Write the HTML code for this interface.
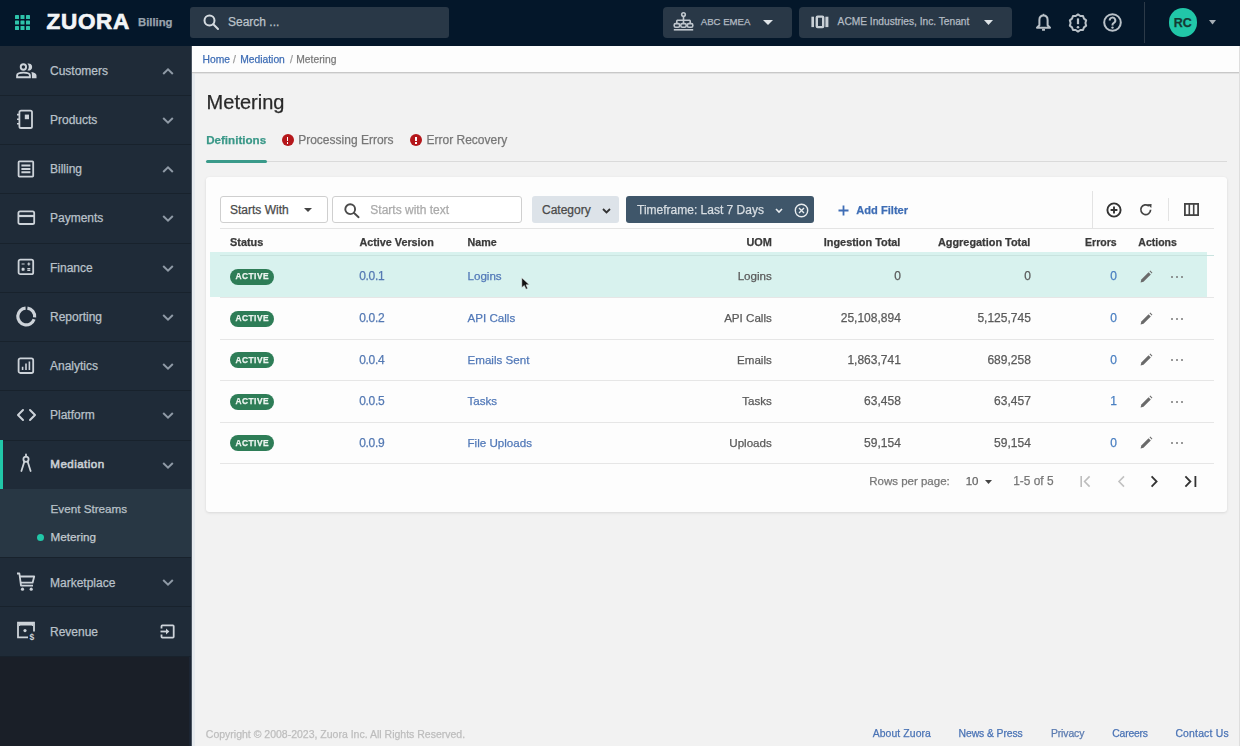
<!DOCTYPE html><html><head><meta charset="utf-8"><style>
*{box-sizing:border-box;margin:0;padding:0}
html,body{width:1240px;height:746px;overflow:hidden;background:#f2f2f2;font-family:"Liberation Sans",sans-serif;position:relative}
.a{position:absolute}
.t{position:absolute;white-space:pre;line-height:1;-webkit-text-stroke:0.25px currentColor}
svg{position:absolute;overflow:visible}
</style></head><body><div id="root" style="position:absolute;left:0;top:0;width:1240px;height:746px;filter:blur(0.35px)">
<div class="a" style="left:0px;top:0px;width:1240px;height:46px;background:#04172a;"></div>
<svg style="left:15px;top:15px;" width="15" height="15" viewBox="0 0 15 15"><g fill="#2ec3aa"><rect x="0.0" y="0.0" width="4" height="4" rx="0.6"/><rect x="0.0" y="5.5" width="4" height="4" rx="0.6"/><rect x="0.0" y="11.0" width="4" height="4" rx="0.6"/><rect x="5.5" y="0.0" width="4" height="4" rx="0.6"/><rect x="5.5" y="5.5" width="4" height="4" rx="0.6"/><rect x="5.5" y="11.0" width="4" height="4" rx="0.6"/><rect x="11.0" y="0.0" width="4" height="4" rx="0.6"/><rect x="11.0" y="5.5" width="4" height="4" rx="0.6"/><rect x="11.0" y="11.0" width="4" height="4" rx="0.6"/></g></svg>
<div class="t" style="left:46.5px;top:11.27px;font-size:22.5px;font-weight:700;color:#f3f5f7;letter-spacing:0.7px;-webkit-text-stroke:0.7px #f3f5f7">ZUORA</div>
<div class="t" style="left:138px;top:17.03px;font-size:11.3px;font-weight:700;color:#98a2ad;">Billing</div>
<div class="a" style="left:190px;top:7px;width:259px;height:31px;background:#293847;border-radius:3px"></div>
<svg style="left:203px;top:14px;" width="16" height="16" viewBox="0 0 16 16"><g fill="none" stroke="#d5dbe0" stroke-width="2"><circle cx="6.5" cy="6.5" r="5"/><path d="M10.3 10.3 L15 15" stroke-linecap="round"/></g></svg>
<div class="t" style="left:228px;top:16.04px;font-size:12px;font-weight:400;color:#bcc3ca;">Search ...</div>
<div class="a" style="left:663px;top:7px;width:129px;height:31px;background:#293847;border-radius:4px"></div>
<svg style="left:673px;top:12px;" width="21" height="20" viewBox="0 0 21 20"><g fill="none" stroke="#bfc6cd" stroke-width="1.6"><circle cx="10.5" cy="2.6" r="1.8"/><path d="M10.5 4.4V8.2 M3.8 8.2H17.2 M3.8 8.2V11 M10.5 8.2V11 M17.2 8.2V11"/><rect x="1.2" y="11.6" width="5.4" height="3.6" rx="1.4"/><rect x="7.8" y="11.6" width="5.4" height="3.6" rx="1.4"/><rect x="14.4" y="11.6" width="5.4" height="3.6" rx="1.4"/><path d="M0.8 17.8 H20.2"/></g></svg>
<div class="t" style="left:700.8px;top:17.45px;font-size:9.6px;font-weight:400;color:#b3bbc3;">ABC EMEA</div>
<svg style="left:763px;top:19.5px;" width="10" height="5" viewBox="0 0 10 5"><path d="M0 0H10L5 5Z" fill="#dfe4e8"/></svg>
<div class="a" style="left:799px;top:7px;width:213px;height:31px;background:#293847;border-radius:4px"></div>
<svg style="left:811px;top:15px;" width="18" height="14" viewBox="0 0 18 14"><g fill="#c9d0d6"><rect x="0.4" y="1.7" width="2.6" height="10.4"/><rect x="14.4" y="1.7" width="3" height="10.4"/></g><rect x="5.8" y="1.6" width="6.4" height="10.5" rx="0.8" fill="none" stroke="#c9d0d6" stroke-width="2.4"/></svg>
<div class="t" style="left:837.6px;top:17.27px;font-size:10.2px;font-weight:400;color:#b3bbc3;">ACME Industries, Inc. Tenant</div>
<svg style="left:984px;top:20px;" width="9" height="5" viewBox="0 0 9 5"><path d="M0 0H9L4.5 5Z" fill="#dfe4e8"/></svg>
<svg style="left:1035px;top:13px;" width="17" height="19" viewBox="0 0 17 19"><path d="M8.5 2.4C6 2.4 4.4 4.3 4.4 6.9V12.2L2 14.8H15L12.6 12.2V6.9C12.6 4.3 11 2.4 8.5 2.4Z" fill="none" stroke="#b9c1c8" stroke-width="2" stroke-linejoin="round"/><path d="M8.5 0.8V2.6" stroke="#b9c1c8" stroke-width="1.6"/><rect x="7" y="15.8" width="3" height="2" rx="0.6" fill="#b9c1c8"/></svg>
<svg style="left:1068px;top:12.5px;" width="20" height="20" viewBox="0 0 20 20"><path d="M10.00 1.40 L12.29 2.96 L15.05 3.04 L15.99 5.65 L18.18 7.34 L17.40 10.00 L18.18 12.66 L15.99 14.35 L15.05 16.96 L12.29 17.04 L10.00 18.60 L7.71 17.04 L4.95 16.96 L4.01 14.35 L1.82 12.66 L2.60 10.00 L1.82 7.34 L4.01 5.65 L4.95 3.04 L7.71 2.96Z" fill="none" stroke="#b9c1c8" stroke-width="2" stroke-linejoin="round"/><path d="M10 5.4v5.8" stroke="#b9c1c8" stroke-width="2.2"/><circle cx="10" cy="14.2" r="1.3" fill="#b9c1c8"/></svg>
<svg style="left:1103px;top:13px;" width="19" height="19" viewBox="0 0 19 19"><circle cx="9.5" cy="9.5" r="8.3" fill="none" stroke="#b9c1c8" stroke-width="2"/><path d="M6.7 7.4a2.8 2.8 0 1 1 4.2 2.4c-.9.6-1.4 1-1.4 2v.7" fill="none" stroke="#b9c1c8" stroke-width="2"/><circle cx="9.5" cy="14.6" r="1.2" fill="#b9c1c8"/></svg>
<div class="a" style="left:1144px;top:2px;width:1px;height:41px;background:#2c3a48;"></div>
<div class="a" style="left:1168.5px;top:8px;width:28.5px;height:28.5px;border-radius:50%;background:#21c7a8"></div>
<div class="t" style="left:1168.5px;top:16.5px;width:28.5px;text-align:center;font-size:12.5px;font-weight:700;color:#143a33">RC</div>
<svg style="left:1208.5px;top:20px;" width="7" height="4.5" viewBox="0 0 7 4.5"><path d="M0 0H7L3.5 4.5Z" fill="#a6aeb6"/></svg>
<div class="a" style="left:0px;top:46px;width:191px;height:700px;background:#1a1f28;"></div>
<div class="a" style="left:189px;top:46px;width:2px;height:700px;background:#1c2533;"></div>
<div class="a" style="left:191px;top:46px;width:1px;height:700px;background:#4b5561;"></div>
<div class="a" style="left:192px;top:46px;width:3px;height:700px;background:#e6eaee;"></div>
<div class="a" style="left:0px;top:46px;width:191px;height:610px;background:#1f2b38;"></div>
<div class="t" style="left:50px;top:65.34px;font-size:12px;font-weight:400;color:#b9c1c9;">Customers</div>
<svg style="left:161.5px;top:67.5px;" width="12" height="7" viewBox="0 0 12 7"><path d="M1.2 6L6 1.4L10.8 6" fill="none" stroke="#8f9aa6" stroke-width="2"/></svg>
<div class="a" style="left:0px;top:95px;width:191px;height:1px;background:#18222c;"></div>
<div class="t" style="left:50px;top:114.34px;font-size:12px;font-weight:400;color:#b9c1c9;">Products</div>
<svg style="left:161.5px;top:116.5px;" width="12" height="7" viewBox="0 0 12 7"><path d="M1.2 1L6 5.6L10.8 1" fill="none" stroke="#8f9aa6" stroke-width="2"/></svg>
<div class="a" style="left:0px;top:144px;width:191px;height:1px;background:#18222c;"></div>
<div class="t" style="left:50px;top:163.34px;font-size:12px;font-weight:400;color:#b9c1c9;">Billing</div>
<svg style="left:161.5px;top:165.5px;" width="12" height="7" viewBox="0 0 12 7"><path d="M1.2 6L6 1.4L10.8 6" fill="none" stroke="#8f9aa6" stroke-width="2"/></svg>
<div class="a" style="left:0px;top:193px;width:191px;height:1px;background:#18222c;"></div>
<div class="t" style="left:50px;top:212.34px;font-size:12px;font-weight:400;color:#b9c1c9;">Payments</div>
<svg style="left:161.5px;top:214.5px;" width="12" height="7" viewBox="0 0 12 7"><path d="M1.2 1L6 5.6L10.8 1" fill="none" stroke="#8f9aa6" stroke-width="2"/></svg>
<div class="a" style="left:0px;top:243px;width:191px;height:1px;background:#18222c;"></div>
<div class="t" style="left:50px;top:262.34px;font-size:12px;font-weight:400;color:#b9c1c9;">Finance</div>
<svg style="left:161.5px;top:264.5px;" width="12" height="7" viewBox="0 0 12 7"><path d="M1.2 1L6 5.6L10.8 1" fill="none" stroke="#8f9aa6" stroke-width="2"/></svg>
<div class="a" style="left:0px;top:292px;width:191px;height:1px;background:#18222c;"></div>
<div class="t" style="left:50px;top:311.34px;font-size:12px;font-weight:400;color:#b9c1c9;">Reporting</div>
<svg style="left:161.5px;top:313.5px;" width="12" height="7" viewBox="0 0 12 7"><path d="M1.2 1L6 5.6L10.8 1" fill="none" stroke="#8f9aa6" stroke-width="2"/></svg>
<div class="a" style="left:0px;top:341px;width:191px;height:1px;background:#18222c;"></div>
<div class="t" style="left:50px;top:360.34px;font-size:12px;font-weight:400;color:#b9c1c9;">Analytics</div>
<svg style="left:161.5px;top:362.5px;" width="12" height="7" viewBox="0 0 12 7"><path d="M1.2 1L6 5.6L10.8 1" fill="none" stroke="#8f9aa6" stroke-width="2"/></svg>
<div class="a" style="left:0px;top:390px;width:191px;height:1px;background:#18222c;"></div>
<div class="t" style="left:50px;top:409.34px;font-size:12px;font-weight:400;color:#b9c1c9;">Platform</div>
<svg style="left:161.5px;top:411.5px;" width="12" height="7" viewBox="0 0 12 7"><path d="M1.2 1L6 5.6L10.8 1" fill="none" stroke="#8f9aa6" stroke-width="2"/></svg>
<div class="a" style="left:0px;top:440px;width:191px;height:1px;background:#18222c;"></div>
<div class="t" style="left:50.3px;top:458.39px;font-size:11.6px;font-weight:400;color:#c8ced4;-webkit-text-stroke:0.6px #c8ced4;letter-spacing:0.45px">Mediation</div>
<svg style="left:161.5px;top:461.5px;" width="12" height="7" viewBox="0 0 12 7"><path d="M1.2 1L6 5.6L10.8 1" fill="none" stroke="#8f9aa6" stroke-width="2"/></svg>
<div class="a" style="left:0px;top:557px;width:191px;height:1px;background:#18222c;"></div>
<div class="t" style="left:50px;top:577.24px;font-size:12px;font-weight:400;color:#b9c1c9;">Marketplace</div>
<svg style="left:161.5px;top:578.5px;" width="12" height="7" viewBox="0 0 12 7"><path d="M1.2 1L6 5.6L10.8 1" fill="none" stroke="#8f9aa6" stroke-width="2"/></svg>
<div class="a" style="left:0px;top:606px;width:191px;height:1px;background:#18222c;"></div>
<div class="t" style="left:50px;top:626.24px;font-size:12px;font-weight:400;color:#b9c1c9;">Revenue</div>
<div class="a" style="left:0px;top:656px;width:191px;height:1px;background:#18222c;"></div>
<div class="a" style="left:0px;top:440px;width:2.5px;height:49px;background:#21c7a8;"></div>
<div class="a" style="left:0px;top:489px;width:191px;height:68px;background:#283744;"></div>
<div class="t" style="left:50.5px;top:503.08px;font-size:11.7px;font-weight:400;color:#b9c1c8;">Event Streams</div>
<div class="t" style="left:50.5px;top:530.98px;font-size:11.7px;font-weight:400;color:#c3cad0;">Metering</div>
<div class="a" style="left:36.5px;top:533.5px;width:7px;height:7px;border-radius:50%;background:#21c7a8"></div>
<svg style="left:15px;top:62px;" width="22" height="17" viewBox="0 0 22 17"><g fill="none" stroke="#cdd3d9" stroke-width="1.9"><circle cx="8.4" cy="5" r="2.7"/><path d="M2.1 15.2V13.4C2.1 11.4 4.5 10.6 8.5 10.6S14.9 11.4 14.9 13.4V15.2Z"/></g><path d="M12.4 1.6A3.6 3.6 0 1 1 12.4 8.4A4.8 4.8 0 0 0 12.4 1.6Z" fill="#cdd3d9"/><path d="M16.4 10.1C19.5 10.6 21.5 11.6 21.5 13.6V16.2H16.9V13.4C16.9 12 16.7 11 16.4 10.1Z" fill="#cdd3d9"/></svg>
<svg style="left:16px;top:109px;" width="18" height="21" viewBox="0 0 18 21"><g fill="none" stroke="#cdd3d9" stroke-width="1.8"><rect x="3.4" y="1.6" width="12.6" height="17.4" rx="1.6"/></g><rect x="8.8" y="5.6" width="4.2" height="4.6" fill="#cdd3d9"/><g stroke="#cdd3d9" stroke-width="1.6"><path d="M1 5.6h2.4M1 10.2h2.4M1 14.8h2.4"/></g></svg>
<svg style="left:17px;top:160px;" width="18" height="18" viewBox="0 0 18 18"><rect x="1.6" y="1.4" width="14.6" height="15.2" rx="0.8" fill="none" stroke="#cdd3d9" stroke-width="1.8"/><g stroke="#cdd3d9" stroke-width="2"><path d="M4.4 5.5h9M4.4 8.9h9M4.4 12.3h9"/></g></svg>
<svg style="left:17px;top:210px;" width="19" height="16" viewBox="0 0 19 16"><rect x="1.4" y="1.4" width="15.8" height="12.6" rx="1.6" fill="none" stroke="#cdd3d9" stroke-width="1.8"/><path d="M1.4 6h15.8" stroke="#cdd3d9" stroke-width="2.2"/></svg>
<svg style="left:17px;top:258px;" width="18" height="18" viewBox="0 0 18 18"><rect x="1.6" y="1.6" width="14.6" height="14.6" rx="1.8" fill="none" stroke="#cdd3d9" stroke-width="1.8"/><g stroke="#cdd3d9" stroke-width="1.2"><path d="M4.6 6h3M11.8 4.5v3M10.3 6h3M4.6 11.4h3M10.3 10.6h3M10.3 12.3h3M5 10l2.2 2.6M7.2 10L5 12.6"/></g></svg>
<svg style="left:16px;top:306px;" width="21" height="21" viewBox="0 0 21 21"><path d="M9.6 2.1A8.4 8.4 0 1 0 18.1 13.3" fill="none" stroke="#cdd3d9" stroke-width="3.2"/><path d="M11.4 2.1A8.4 8.4 0 0 1 18.6 11.3" fill="none" stroke="#cdd3d9" stroke-width="3.2"/></svg>
<svg style="left:17px;top:357px;" width="18" height="18" viewBox="0 0 18 18"><rect x="1.6" y="1.4" width="14.6" height="14.6" rx="1.8" fill="none" stroke="#cdd3d9" stroke-width="1.8"/><g stroke="#cdd3d9" stroke-width="1.6"><path d="M5.6 13V9.8M9 13V6.4M12.4 13V4.6"/></g></svg>
<svg style="left:16px;top:408px;" width="21" height="14" viewBox="0 0 21 14"><g fill="none" stroke="#cdd3d9" stroke-width="2" stroke-linecap="round" stroke-linejoin="round"><path d="M7 2L2 7L7 12M14 2L19 7L14 12"/></g></svg>
<svg style="left:19px;top:453px;" width="14" height="20" viewBox="0 0 14 20"><g fill="none" stroke="#cdd3d9" stroke-width="1.8" stroke-linecap="round"><path d="M7 1.5v2"/><circle cx="7" cy="6.3" r="2.6"/><path d="M5.4 8.6L2.4 18M8.6 8.6L11.6 18"/></g></svg>
<svg style="left:16px;top:572px;" width="20" height="20" viewBox="0 0 20 20"><g fill="none" stroke="#cdd3d9" stroke-width="1.8" stroke-linejoin="round"><path d="M1 1.5h2.4l1.6 12.2h12"/><path d="M4 4.5h14.2l-1.6 6.2H5"/></g><circle cx="6.5" cy="17.2" r="1.6" fill="#cdd3d9"/><circle cx="15.2" cy="17.2" r="1.6" fill="#cdd3d9"/></svg>
<svg style="left:16px;top:621px;" width="20" height="20" viewBox="0 0 20 20"><g fill="none" stroke="#cdd3d9" stroke-width="1.8"><path d="M12 16.4H2V1.6h16v9"/></g><path d="M3 2h14v3c-1 0-1.4-.6-1.4-.6H4.4S4 5 3 5z" fill="#cdd3d9"/><circle cx="9" cy="9.6" r="1.6" fill="#cdd3d9"/><text x="13.5" y="19" font-size="8.5" font-weight="700" fill="#cdd3d9" font-family="Liberation Sans">$</text></svg>
<svg style="left:160px;top:624px;" width="15" height="15" viewBox="0 0 15 15"><g fill="none" stroke="#cdd3d9" stroke-width="1.8"><path d="M1.5 4.5V2.2c0-.4.3-.8.8-.8h10.6c.4 0 .8.4.8.8v10.6c0 .4-.4.8-.8.8H2.3c-.5 0-.8-.4-.8-.8v-2.4"/><path d="M0.5 7.5h6.5"/></g><path d="M6 4.4L9.4 7.5L6 10.6z" fill="#cdd3d9"/></svg>
<div class="a" style="left:192px;top:46px;width:1048px;height:26px;background:#fdfdfd;"></div>
<div class="a" style="left:192px;top:72px;width:1048px;height:1px;background:#c8c8c8;"></div>
<div class="a" style="left:192px;top:73px;width:1048px;height:1px;background:#e2e2e2;"></div>
<div class="t" style="left:202.5px;top:54.66px;font-size:10.3px;font-weight:400;color:#3e6db5;">Home</div>
<div class="t" style="left:233px;top:54.66px;font-size:10.3px;font-weight:400;color:#9a9a9a;">/</div>
<div class="t" style="left:240.2px;top:54.66px;font-size:10.3px;font-weight:400;color:#3e6db5;">Mediation</div>
<div class="t" style="left:290px;top:54.66px;font-size:10.3px;font-weight:400;color:#9a9a9a;">/</div>
<div class="t" style="left:296.3px;top:54.66px;font-size:10.3px;font-weight:400;color:#7a7a7a;">Metering</div>
<div class="t" style="left:206.6px;top:92.40px;font-size:20px;font-weight:400;color:#2a2a2a;">Metering</div>
<div class="t" style="left:206.2px;top:133.89px;font-size:11.6px;font-weight:700;color:#3a9888;">Definitions</div>
<div class="a" style="left:281.5px;top:134px;width:12px;height:12px;border-radius:50%;background:#b5171b"></div>
<div class="a" style="left:286.7px;top:136.5px;width:1.6px;height:4.6px;background:#ffffff;"></div>
<div class="a" style="left:286.7px;top:142.2px;width:1.6px;height:1.5px;background:#ffffff;"></div>
<div class="t" style="left:298.2px;top:133.84px;font-size:12px;font-weight:400;color:#777777;">Processing Errors</div>
<div class="a" style="left:410px;top:134px;width:12px;height:12px;border-radius:50%;background:#b5171b"></div>
<div class="a" style="left:415.2px;top:136.5px;width:1.6px;height:4.6px;background:#ffffff;"></div>
<div class="a" style="left:415.2px;top:142.2px;width:1.6px;height:1.5px;background:#ffffff;"></div>
<div class="t" style="left:426.5px;top:133.84px;font-size:12px;font-weight:400;color:#777777;">Error Recovery</div>
<div class="a" style="left:206px;top:161px;width:1021px;height:1px;background:#dadada;"></div>
<div class="a" style="left:206px;top:160px;width:61px;height:3px;background:#3a9a8a;border-radius:1.5px"></div>
<div class="a" style="left:206px;top:177px;width:1021px;height:335px;background:#fdfdfd;border-radius:3px;box-shadow:0 1px 3px rgba(0,0,0,.10),0 0 1px rgba(0,0,0,.10)"></div>
<div class="a" style="left:220px;top:195.5px;width:108px;height:27.5px;border:1px solid #cfcfcf;border-radius:3px;background:#fff"></div>
<div class="t" style="left:230px;top:203.94px;font-size:12px;font-weight:400;color:#4a4a4a;">Starts With</div>
<svg style="left:303.5px;top:208px;" width="8" height="4" viewBox="0 0 8 4"><path d="M0 0H8L4 4Z" fill="#444"/></svg>
<div class="a" style="left:331.5px;top:195.5px;width:190px;height:27.5px;border:1px solid #cfcfcf;border-radius:3px;background:#fff"></div>
<svg style="left:344px;top:202.5px;" width="17" height="15" viewBox="0 0 17 15"><g fill="none" stroke="#4a4a4a" stroke-width="1.9"><circle cx="6.2" cy="6.2" r="4.9"/><path d="M9.8 9.8L14.6 14.2" stroke-linecap="round"/></g></svg>
<div class="t" style="left:370.3px;top:203.94px;font-size:12px;font-weight:400;color:#aaaaaa;">Starts with text</div>
<div class="a" style="left:532px;top:195.5px;width:87px;height:27.5px;background:#dde3e9;border-radius:3px"></div>
<div class="t" style="left:542px;top:203.94px;font-size:12px;font-weight:400;color:#4a4a4a;">Category</div>
<svg style="left:601.5px;top:207.5px;" width="9" height="6" viewBox="0 0 9 6"><path d="M1 1L4.5 4.5L8 1" fill="none" stroke="#333" stroke-width="1.8"/></svg>
<div class="a" style="left:626px;top:195.5px;width:188px;height:27.5px;background:#3f566a;border-radius:3px"></div>
<div class="t" style="left:637px;top:203.94px;font-size:12px;font-weight:400;color:#d8dee3;">Timeframe: Last 7 Days</div>
<svg style="left:775px;top:207.5px;" width="8" height="6" viewBox="0 0 8 6"><path d="M1 1L4 4L7 1" fill="none" stroke="#e8ecef" stroke-width="1.6"/></svg>
<svg style="left:794px;top:203px;" width="15" height="15" viewBox="0 0 15 15"><circle cx="7.5" cy="7.5" r="6.2" fill="none" stroke="#e8ecef" stroke-width="1.4"/><path d="M5 5L10 10M10 5L5 10" stroke="#e8ecef" stroke-width="1.4"/></svg>
<svg style="left:838px;top:205px;" width="11" height="11" viewBox="0 0 11 11"><path d="M5.5 0.5V10.5M0.5 5.5H10.5" stroke="#3e6db5" stroke-width="1.8"/></svg>
<div class="t" style="left:856.3px;top:204.76px;font-size:11.1px;font-weight:700;color:#3e6db5;">Add Filter</div>
<div class="a" style="left:1091.5px;top:191px;width:1px;height:37px;background:#e3e3e3;"></div>
<svg style="left:1106px;top:201.5px;" width="16" height="16" viewBox="0 0 16 16"><circle cx="8" cy="8" r="6.6" fill="none" stroke="#333" stroke-width="1.9"/><path d="M8 4.6V11.4M4.6 8H11.4" stroke="#333" stroke-width="1.9"/></svg>
<svg style="left:1138.5px;top:203px;" width="14" height="14" viewBox="0 0 14 14"><path d="M11.6 6.8A4.9 4.9 0 1 1 9.9 3" fill="none" stroke="#444" stroke-width="1.7"/><path d="M8.4 1.2L12.6 0.9L12.3 5.1Z" fill="#444"/></svg>
<div class="a" style="left:1168px;top:198px;width:1px;height:23px;background:#e3e3e3;"></div>
<svg style="left:1183.5px;top:203px;" width="15" height="13" viewBox="0 0 15 13"><rect x="0.9" y="0.9" width="13.2" height="11.2" fill="none" stroke="#444" stroke-width="1.8"/><path d="M5.3 1V12M9.7 1V12" stroke="#444" stroke-width="1.6"/></svg>
<div class="a" style="left:220px;top:228px;width:994px;height:1px;background:#e4e4e4;"></div>
<div class="t" style="left:230px;top:236.78px;font-size:10.9px;font-weight:700;color:#3a3a3a;">Status</div>
<div class="t" style="left:359.4px;top:236.80px;font-size:10.8px;font-weight:700;color:#3a3a3a;">Active Version</div>
<div class="t" style="left:467.5px;top:236.81px;font-size:10.7px;font-weight:700;color:#3a3a3a;">Name</div>
<div class="t" style="right:468.20000000000005px;top:236.78px;font-size:10.9px;font-weight:700;color:#3a3a3a;">UOM</div>
<div class="t" style="right:339.6px;top:236.78px;font-size:10.9px;font-weight:700;color:#3a3a3a;">Ingestion Total</div>
<div class="t" style="right:209.70000000000005px;top:236.78px;font-size:10.9px;font-weight:700;color:#3a3a3a;">Aggregation Total</div>
<div class="t" style="right:123.40000000000009px;top:236.83px;font-size:10.5px;font-weight:700;color:#3a3a3a;">Errors</div>
<div class="t" style="left:1138.3px;top:236.83px;font-size:10.5px;font-weight:700;color:#3a3a3a;">Actions</div>
<div class="a" style="left:210px;top:252px;width:997px;height:45px;background:#d8f2ee;"></div>
<div class="a" style="left:220px;top:255px;width:994px;height:1px;background:#c9e3df;"></div>
<div class="a" style="left:230px;top:268.5px;width:44px;height:16px;border-radius:8px;background:#2e7d57"></div>
<div class="t" style="left:230px;top:272.3px;width:44px;text-align:center;font-size:8.4px;font-weight:700;color:#eef6f1;letter-spacing:0.5px;text-indent:0.5px">ACTIVE</div>
<div class="t" style="left:359.3px;top:270.14px;font-size:12px;font-weight:400;color:#5479b3;letter-spacing:-0.35px">0.0.1</div>
<div class="t" style="left:467.5px;top:270.19px;font-size:11.6px;font-weight:400;color:#5279b8;">Logins</div>
<div class="t" style="right:468.20000000000005px;top:270.19px;font-size:11.6px;font-weight:400;color:#5a5a5a;">Logins</div>
<div class="t" style="right:339.20000000000005px;top:270.14px;font-size:12px;font-weight:400;color:#5a5a5a;">0</div>
<div class="t" style="right:209.20000000000005px;top:270.14px;font-size:12px;font-weight:400;color:#5a5a5a;">0</div>
<div class="t" style="right:123.20000000000005px;top:270.14px;font-size:12px;font-weight:400;color:#4a7fc1;">0</div>
<svg style="left:1139px;top:269.5px;" width="14" height="14" viewBox="0 0 14 14"><path d="M1.6 12.4L2.3 9.5L9.6 2.2L11.8 4.4L4.5 11.7Z" fill="#6a6a6a"/><path d="M10.5 1.3L11.3 0.6L13.4 2.7L12.7 3.5Z" fill="#6a6a6a"/></svg>
<div class="a" style="left:1171.0px;top:275.8px;width:2px;height:2px;background:#777;border-radius:1px"></div>
<div class="a" style="left:1176.2px;top:275.8px;width:2px;height:2px;background:#777;border-radius:1px"></div>
<div class="a" style="left:1181.4px;top:275.8px;width:2px;height:2px;background:#777;border-radius:1px"></div>
<div class="a" style="left:220px;top:297px;width:994px;height:1px;background:#e6e6e6;"></div>
<div class="a" style="left:230px;top:310.5px;width:44px;height:16px;border-radius:8px;background:#2e7d57"></div>
<div class="t" style="left:230px;top:314.3px;width:44px;text-align:center;font-size:8.4px;font-weight:700;color:#eef6f1;letter-spacing:0.5px;text-indent:0.5px">ACTIVE</div>
<div class="t" style="left:359.3px;top:312.14px;font-size:12px;font-weight:400;color:#5479b3;letter-spacing:-0.35px">0.0.2</div>
<div class="t" style="left:467.5px;top:312.19px;font-size:11.6px;font-weight:400;color:#5279b8;">API Calls</div>
<div class="t" style="right:468.20000000000005px;top:312.19px;font-size:11.6px;font-weight:400;color:#5a5a5a;">API Calls</div>
<div class="t" style="right:339.20000000000005px;top:312.14px;font-size:12px;font-weight:400;color:#5a5a5a;">25,108,894</div>
<div class="t" style="right:209.20000000000005px;top:312.14px;font-size:12px;font-weight:400;color:#5a5a5a;">5,125,745</div>
<div class="t" style="right:123.20000000000005px;top:312.14px;font-size:12px;font-weight:400;color:#4a7fc1;">0</div>
<svg style="left:1139px;top:311.5px;" width="14" height="14" viewBox="0 0 14 14"><path d="M1.6 12.4L2.3 9.5L9.6 2.2L11.8 4.4L4.5 11.7Z" fill="#6a6a6a"/><path d="M10.5 1.3L11.3 0.6L13.4 2.7L12.7 3.5Z" fill="#6a6a6a"/></svg>
<div class="a" style="left:1171.0px;top:317.8px;width:2px;height:2px;background:#777;border-radius:1px"></div>
<div class="a" style="left:1176.2px;top:317.8px;width:2px;height:2px;background:#777;border-radius:1px"></div>
<div class="a" style="left:1181.4px;top:317.8px;width:2px;height:2px;background:#777;border-radius:1px"></div>
<div class="a" style="left:220px;top:338.5px;width:994px;height:1px;background:#e6e6e6;"></div>
<div class="a" style="left:230px;top:352.0px;width:44px;height:16px;border-radius:8px;background:#2e7d57"></div>
<div class="t" style="left:230px;top:355.8px;width:44px;text-align:center;font-size:8.4px;font-weight:700;color:#eef6f1;letter-spacing:0.5px;text-indent:0.5px">ACTIVE</div>
<div class="t" style="left:359.3px;top:353.64px;font-size:12px;font-weight:400;color:#5479b3;letter-spacing:-0.35px">0.0.4</div>
<div class="t" style="left:467.5px;top:353.69px;font-size:11.6px;font-weight:400;color:#5279b8;">Emails Sent</div>
<div class="t" style="right:468.20000000000005px;top:353.69px;font-size:11.6px;font-weight:400;color:#5a5a5a;">Emails</div>
<div class="t" style="right:339.20000000000005px;top:353.64px;font-size:12px;font-weight:400;color:#5a5a5a;">1,863,741</div>
<div class="t" style="right:209.20000000000005px;top:353.64px;font-size:12px;font-weight:400;color:#5a5a5a;">689,258</div>
<div class="t" style="right:123.20000000000005px;top:353.64px;font-size:12px;font-weight:400;color:#4a7fc1;">0</div>
<svg style="left:1139px;top:353.0px;" width="14" height="14" viewBox="0 0 14 14"><path d="M1.6 12.4L2.3 9.5L9.6 2.2L11.8 4.4L4.5 11.7Z" fill="#6a6a6a"/><path d="M10.5 1.3L11.3 0.6L13.4 2.7L12.7 3.5Z" fill="#6a6a6a"/></svg>
<div class="a" style="left:1171.0px;top:359.3px;width:2px;height:2px;background:#777;border-radius:1px"></div>
<div class="a" style="left:1176.2px;top:359.3px;width:2px;height:2px;background:#777;border-radius:1px"></div>
<div class="a" style="left:1181.4px;top:359.3px;width:2px;height:2px;background:#777;border-radius:1px"></div>
<div class="a" style="left:220px;top:380px;width:994px;height:1px;background:#e6e6e6;"></div>
<div class="a" style="left:230px;top:393.5px;width:44px;height:16px;border-radius:8px;background:#2e7d57"></div>
<div class="t" style="left:230px;top:397.3px;width:44px;text-align:center;font-size:8.4px;font-weight:700;color:#eef6f1;letter-spacing:0.5px;text-indent:0.5px">ACTIVE</div>
<div class="t" style="left:359.3px;top:395.14px;font-size:12px;font-weight:400;color:#5479b3;letter-spacing:-0.35px">0.0.5</div>
<div class="t" style="left:467.5px;top:395.19px;font-size:11.6px;font-weight:400;color:#5279b8;">Tasks</div>
<div class="t" style="right:468.20000000000005px;top:395.19px;font-size:11.6px;font-weight:400;color:#5a5a5a;">Tasks</div>
<div class="t" style="right:339.20000000000005px;top:395.14px;font-size:12px;font-weight:400;color:#5a5a5a;">63,458</div>
<div class="t" style="right:209.20000000000005px;top:395.14px;font-size:12px;font-weight:400;color:#5a5a5a;">63,457</div>
<div class="t" style="right:123.20000000000005px;top:395.14px;font-size:12px;font-weight:400;color:#4a7fc1;">1</div>
<svg style="left:1139px;top:394.5px;" width="14" height="14" viewBox="0 0 14 14"><path d="M1.6 12.4L2.3 9.5L9.6 2.2L11.8 4.4L4.5 11.7Z" fill="#6a6a6a"/><path d="M10.5 1.3L11.3 0.6L13.4 2.7L12.7 3.5Z" fill="#6a6a6a"/></svg>
<div class="a" style="left:1171.0px;top:400.8px;width:2px;height:2px;background:#777;border-radius:1px"></div>
<div class="a" style="left:1176.2px;top:400.8px;width:2px;height:2px;background:#777;border-radius:1px"></div>
<div class="a" style="left:1181.4px;top:400.8px;width:2px;height:2px;background:#777;border-radius:1px"></div>
<div class="a" style="left:220px;top:421.5px;width:994px;height:1px;background:#e6e6e6;"></div>
<div class="a" style="left:230px;top:435.0px;width:44px;height:16px;border-radius:8px;background:#2e7d57"></div>
<div class="t" style="left:230px;top:438.8px;width:44px;text-align:center;font-size:8.4px;font-weight:700;color:#eef6f1;letter-spacing:0.5px;text-indent:0.5px">ACTIVE</div>
<div class="t" style="left:359.3px;top:436.64px;font-size:12px;font-weight:400;color:#5479b3;letter-spacing:-0.35px">0.0.9</div>
<div class="t" style="left:467.5px;top:436.69px;font-size:11.6px;font-weight:400;color:#5279b8;">File Uploads</div>
<div class="t" style="right:468.20000000000005px;top:436.69px;font-size:11.6px;font-weight:400;color:#5a5a5a;">Uploads</div>
<div class="t" style="right:339.20000000000005px;top:436.64px;font-size:12px;font-weight:400;color:#5a5a5a;">59,154</div>
<div class="t" style="right:209.20000000000005px;top:436.64px;font-size:12px;font-weight:400;color:#5a5a5a;">59,154</div>
<div class="t" style="right:123.20000000000005px;top:436.64px;font-size:12px;font-weight:400;color:#4a7fc1;">0</div>
<svg style="left:1139px;top:436.0px;" width="14" height="14" viewBox="0 0 14 14"><path d="M1.6 12.4L2.3 9.5L9.6 2.2L11.8 4.4L4.5 11.7Z" fill="#6a6a6a"/><path d="M10.5 1.3L11.3 0.6L13.4 2.7L12.7 3.5Z" fill="#6a6a6a"/></svg>
<div class="a" style="left:1171.0px;top:442.3px;width:2px;height:2px;background:#777;border-radius:1px"></div>
<div class="a" style="left:1176.2px;top:442.3px;width:2px;height:2px;background:#777;border-radius:1px"></div>
<div class="a" style="left:1181.4px;top:442.3px;width:2px;height:2px;background:#777;border-radius:1px"></div>
<div class="a" style="left:220px;top:463px;width:994px;height:1px;background:#e6e6e6;"></div>
<div class="t" style="left:869.2px;top:475.50px;font-size:11.5px;font-weight:400;color:#777777;">Rows per page:</div>
<div class="t" style="left:965.7px;top:475.50px;font-size:11.5px;font-weight:400;color:#666;">10</div>
<svg style="left:985px;top:479.5px;" width="7" height="4" viewBox="0 0 7 4"><path d="M0 0H7L3.5 4Z" fill="#444"/></svg>
<div class="t" style="left:1013.2px;top:475.85px;font-size:11.9px;font-weight:400;color:#777777;">1-5 of 5</div>
<svg style="left:1079.5px;top:474.5px;" width="13" height="13" viewBox="0 0 13 13"><g fill="none" stroke="#bdbdbd" stroke-width="1.6"><path d="M1.2 1V12M9.6 1.4L4.6 6.5L9.6 11.6"/></g></svg>
<svg style="left:1116.5px;top:474.5px;" width="9" height="13" viewBox="0 0 9 13"><path d="M7 1.4L2 6.5L7 11.6" fill="none" stroke="#c2c2c2" stroke-width="1.6"/></svg>
<svg style="left:1150px;top:474.5px;" width="9" height="13" viewBox="0 0 9 13"><path d="M1.6 1.4L6.6 6.5L1.6 11.6" fill="none" stroke="#333" stroke-width="1.8"/></svg>
<svg style="left:1183.5px;top:474.5px;" width="13" height="13" viewBox="0 0 13 13"><g fill="none" stroke="#333" stroke-width="1.8"><path d="M1.4 1.4L6.4 6.5L1.4 11.6M11.4 1V12"/></g></svg>
<svg style="left:520.5px;top:276.5px;" width="9" height="13" viewBox="0 0 9 13"><path d="M0.8 0.8V10.6L3.3 8.4L5 12.2L6.7 11.5L5 7.8H8.3Z" fill="#111" stroke="#f4f4f4" stroke-width="0.5"/></svg>
<div class="t" style="left:205.8px;top:729.24px;font-size:10.5px;font-weight:400;color:#bdbdbd;">Copyright © 2008-2023, Zuora Inc. All Rights Reserved.</div>
<div class="t" style="left:872.7px;top:729.25px;font-size:10.4px;font-weight:400;color:#4a73b5;letter-spacing:0.1px">About Zuora</div>
<div class="t" style="left:958.6px;top:729.25px;font-size:10.4px;font-weight:400;color:#4a73b5;letter-spacing:-0.1px">News &amp; Press</div>
<div class="t" style="left:1050.9px;top:729.25px;font-size:10.4px;font-weight:400;color:#5b7bb0;letter-spacing:-0.1px">Privacy</div>
<div class="t" style="left:1112.3px;top:729.25px;font-size:10.4px;font-weight:400;color:#4a73b5;letter-spacing:-0.2px">Careers</div>
<div class="t" style="left:1175.4px;top:729.25px;font-size:10.4px;font-weight:400;color:#4a73b5;letter-spacing:0.2px">Contact Us</div>
<div class="a" style="left:1239px;top:46px;width:1px;height:700px;background:#dedede;"></div>
</div></body></html>
